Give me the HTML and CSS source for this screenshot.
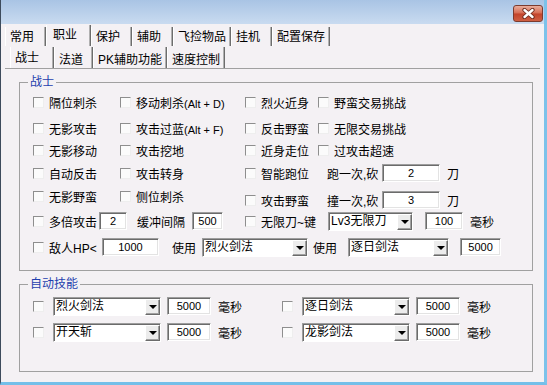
FILE: index.html
```html
<!DOCTYPE html>
<html lang="zh-CN">
<head>
    <meta charset="UTF-8">
    <title>职业 - 战士</title>
    <link rel="stylesheet" href="styles.css">
</head>
<body>

    <div class="window">
        <div class="titlebar">
            <div class="close-button">
                <svg width="13" height="11" viewBox="0 0 13 11">
                    <path d="M2.5 2 L10.5 9 M10.5 2 L2.5 9" stroke="#6b2a1c" stroke-width="4.2" stroke-linecap="round"/>
                    <path d="M2.5 2 L10.5 9 M10.5 2 L2.5 9" stroke="#fff" stroke-width="2.4" stroke-linecap="round"/>
                </svg>
            </div>
        </div>

        <div class="client">
            <div class="tabs tabs-main">
                <div class="tab">常用</div>
                <div class="tab active">职业</div>
                <div class="tab">保护</div>
                <div class="tab">辅助</div>
                <div class="tab">飞捡物品</div>
                <div class="tab">挂机</div>
                <div class="tab">配置保存</div>
            </div>
            <div class="tabs tabs-sub">
                <div class="tab active">战士</div>
                <div class="tab">法道</div>
                <div class="tab">PK辅助功能</div>
                <div class="tab">速度控制</div>
            </div>

            <div class="page">
                <fieldset class="group group-warrior">
                    <legend>战士</legend>
                    <div class="rows">
                        <div class="row">
                            <label class="check c1"><input type="checkbox" class="chk"><span>隔位刺杀</span></label>
                            <label class="check c2"><input type="checkbox" class="chk"><span>移动刺杀<span class="key">(Alt + D)</span></span></label>
                            <label class="check c3"><input type="checkbox" class="chk"><span>烈火近身</span></label>
                            <label class="check"><input type="checkbox" class="chk"><span>野蛮交易挑战</span></label>
                        </div>
                        <div class="row">
                            <label class="check c1"><input type="checkbox" class="chk"><span>无影攻击</span></label>
                            <label class="check c2"><input type="checkbox" class="chk"><span>攻击过蓝<span class="key">(Alt + F)</span></span></label>
                            <label class="check c3"><input type="checkbox" class="chk"><span>反击野蛮</span></label>
                            <label class="check"><input type="checkbox" class="chk"><span>无限交易挑战</span></label>
                        </div>
                        <div class="row">
                            <label class="check c1"><input type="checkbox" class="chk"><span>无影移动</span></label>
                            <label class="check c2"><input type="checkbox" class="chk"><span>攻击挖地</span></label>
                            <label class="check c3"><input type="checkbox" class="chk"><span>近身走位</span></label>
                            <label class="check"><input type="checkbox" class="chk"><span>过攻击超速</span></label>
                        </div>
                        <div class="row">
                            <label class="check c1"><input type="checkbox" class="chk"><span>自动反击</span></label>
                            <label class="check c2"><input type="checkbox" class="chk"><span>攻击转身</span></label>
                            <label class="check c3"><input type="checkbox" class="chk"><span>智能跑位</span></label>
                            <span class="lead">跑一次,砍</span>
                            <input type="text" class="num w-hit" value="2">
                            <span class="unit">刀</span>
                        </div>
                        <div class="row">
                            <label class="check c1"><input type="checkbox" class="chk"><span>无影野蛮</span></label>
                            <label class="check c2"><input type="checkbox" class="chk"><span>侧位刺杀</span></label>
                            <div class="shift">
                                <label class="check c3"><input type="checkbox" class="chk"><span>攻击野蛮</span></label>
                                <span class="lead">撞一次,砍</span>
                                <input type="text" class="num w-hit" value="3">
                                <span class="unit">刀</span>
                            </div>
                        </div>
                        <div class="row">
                            <label class="check"><input type="checkbox" class="chk"><span>多倍攻击</span></label>
                            <input type="text" class="num w-multi" value="2">
                            <span class="buffer-label">缓冲间隔</span>
                            <input type="text" class="num w-buffer" value="500">
                            <label class="check infinite"><input type="checkbox" class="chk"><span>无限刀~键</span></label>
                            <div class="combo w-lv">
                                <span class="combo-text">Lv3无限刀</span>
                                <span class="combo-btn"><i class="arrow"></i></span>
                            </div>
                            <input type="text" class="num w-ms" value="100">
                            <span class="unit">毫秒</span>
                        </div>
                        <div class="row">
                            <label class="check hp"><input type="checkbox" class="chk"><span>敌人HP&lt;</span></label>
                            <input type="text" class="num w-hp" value="1000">
                            <span class="use-1">使用</span>
                            <div class="combo w-skill-a">
                                <span class="combo-text">烈火剑法</span>
                                <span class="combo-btn"><i class="arrow"></i></span>
                            </div>
                            <span class="use-2">使用</span>
                            <div class="combo w-skill-b">
                                <span class="combo-text">逐日剑法</span>
                                <span class="combo-btn"><i class="arrow"></i></span>
                            </div>
                            <input type="text" class="num w-delay" value="5000">
                        </div>
                    </div>
                </fieldset>

                <fieldset class="group group-auto">
                    <legend>自动技能</legend>
                    <div class="skill-rows">
                        <div class="row">
                            <div class="skill">
                                <input type="checkbox" class="chk">
                                <div class="combo w-auto">
                                    <span class="combo-text">烈火剑法</span>
                                    <span class="combo-btn"><i class="arrow"></i></span>
                                </div>
                                <input type="text" class="num w-auto-ms" value="5000">
                                <span class="unit">毫秒</span>
                            </div>
                            <div class="skill">
                                <input type="checkbox" class="chk">
                                <div class="combo w-auto">
                                    <span class="combo-text">逐日剑法</span>
                                    <span class="combo-btn"><i class="arrow"></i></span>
                                </div>
                                <input type="text" class="num w-auto-ms" value="5000">
                                <span class="unit">毫秒</span>
                            </div>
                        </div>
                        <div class="row">
                            <div class="skill">
                                <input type="checkbox" class="chk">
                                <div class="combo w-auto">
                                    <span class="combo-text">开天斩</span>
                                    <span class="combo-btn"><i class="arrow"></i></span>
                                </div>
                                <input type="text" class="num w-auto-ms" value="5000">
                                <span class="unit">毫秒</span>
                            </div>
                            <div class="skill">
                                <input type="checkbox" class="chk">
                                <div class="combo w-auto">
                                    <span class="combo-text">龙影剑法</span>
                                    <span class="combo-btn"><i class="arrow"></i></span>
                                </div>
                                <input type="text" class="num w-auto-ms" value="5000">
                                <span class="unit">毫秒</span>
                            </div>
                        </div>
                    </div>
                </fieldset>
            </div>
        </div>
    </div>

</body>
</html>
```

FILE: styles.css
```css
* {
    box-sizing: border-box;
}

body {
    margin: 0;
    font-family: "Liberation Sans", "Noto Sans CJK SC", sans-serif;
    font-size: 12px;
    color: #000;
    background-color: #f4f1f4;
}

.window {
    width: 547px;
    height: 385px;
    display: flex;
    flex-direction: column;
    border-left: 1px solid #3d4b5c;
    border-right: 3px solid #7cc2ea;
    border-bottom: 3px solid #74bfe9;
    background-color: #f4f1f4;
}

/* title bar */
.titlebar {
    flex: none;
    height: 24px;
    display: flex;
    justify-content: flex-end;
    align-items: flex-start;
    padding: 5px 1px 0 0;
    background: linear-gradient(#a9c4e4, #c9dbf0);
}

.close-button {
    width: 30px;
    height: 17px;
    display: flex;
    align-items: center;
    justify-content: center;
    border: 1px solid #7b3b2f;
    border-radius: 3px;
    background: linear-gradient(#e9ad9c, #d66b52 48%, #c2432a 52%, #cf5f43);
}

.client {
    flex: 1;
    display: flex;
    flex-direction: column;
    padding: 3px 4px 0 4px;
}

/* tabs */
.tabs {
    display: flex;
    flex: none;
}

.tabs-main {
    height: 19px;
}

.tabs-sub {
    height: 21px;
    margin-top: 1px;
    padding-left: 5px;
}

.tab {
    min-width: 41px;
    padding: 2px 4px 0 4px;
    line-height: 16px;
    white-space: nowrap;
    border-left: 1px solid #fff;
    border-right: 1px solid #6d6d6d;
    box-shadow: inset -1px 0 #b0b0b0;
}

.tabs-main .tab.active {
    min-width: 45px;
    margin-top: -2px;
    padding: 2px 4px 0 6px;
}

.tabs-sub .tab {
    min-width: 39px;
    padding-top: 5px;
}

.tabs-sub .tab.active {
    min-width: 44px;
    padding-top: 3px;
}

/* tab page */
.page {
    flex: 1;
    border-top: 1px solid #a0a0a0;
    padding: 6px 0 0 14px;
}

.group {
    margin: 0;
    width: 514px;
    border: 1px solid #a0a0a0;
    padding: 2px 0 0 13px;
}

.group legend {
    margin-left: -5px;
    padding: 0 2px;
    line-height: 14px;
    color: #1f3fae;
}

.group-warrior {
    height: 196px;
}

.group-auto {
    height: 95px;
    margin-top: 6px;
    padding-top: 4px;
}

.rows {
    display: grid;
    grid-template-rows: 26px 22px 23px 23px 25px 26px 22px;
}

.skill-rows {
    display: flex;
    flex-direction: column;
    gap: 4px;
}

.row {
    height: 22px;
    display: flex;
    align-items: center;
    white-space: nowrap;
}

.c1 { width: 87px; }
.c2 { width: 125px; }
.c3 { width: 73px; }

.check {
    display: flex;
    align-items: center;
    gap: 5px;
}

.key {
    font-size: 11px;
}

.chk {
    appearance: none;
    margin: 0;
    width: 11px;
    height: 11px;
    flex: none;
    border: 1px solid;
    border-color: #8e8e8e #eeeeee #eeeeee #8e8e8e;
    background-color: #fbfbfb;
}

.shift {
    display: flex;
    align-items: center;
    margin-top: 8px;
}

.lead {
    width: 55px;
    margin-left: 9px;
}

.unit {
    margin-left: 7px;
}

/* sunken edit boxes */
.num {
    height: 18px;
    margin: 0;
    padding: 0;
    border: 1px solid;
    border-color: #9d9d9d #fff #fff #9d9d9d;
    box-shadow: inset 1px 1px 0 #6b6b6b, inset -1px -1px 0 #e3e3e3;
    background-color: #fff;
    font-family: "Liberation Sans", sans-serif;
    font-size: 11px;
    text-align: center;
    color: #000;
}

.w-hit { width: 58px; }
.w-multi { width: 28px; margin-left: 2px; }
.w-buffer { width: 31px; margin-left: 7px; }
.w-ms { width: 38px; margin-left: 12px; }
.w-hp { width: 57px; }
.w-delay { width: 41px; margin-left: 11px; }
.w-auto-ms { width: 44px; margin-left: 6px; }

.buffer-label {
    margin-left: 10px;
}

.infinite {
    width: 83px;
    margin-left: 22px;
}

.hp {
    width: 69px;
}

.use-1 {
    margin-left: 13px;
}

.use-2 {
    margin-left: 5px;
}

/* combo boxes */
.combo {
    height: 19px;
    display: flex;
    border: 1px solid;
    border-color: #9d9d9d #fff #fff #9d9d9d;
    box-shadow: inset 1px 1px 0 #6b6b6b;
    background-color: #fff;
    padding: 1px 0 0 1px;
}

.combo-text {
    flex: 1;
    padding-left: 1px;
    line-height: 15px;
    overflow: hidden;
}

.combo-btn {
    width: 15px;
    height: 16px;
    display: flex;
    align-items: center;
    justify-content: center;
    border: 1px solid;
    border-color: #fff #6b6b6b #6b6b6b #fff;
    box-shadow: inset -1px -1px 0 #a0a0a0;
    background-color: #ececec;
}

.arrow {
    width: 0;
    height: 0;
    border-left: 4px solid transparent;
    border-right: 4px solid transparent;
    border-top: 4px solid #000;
}

.w-lv { width: 85px; }
.w-skill-a { width: 106px; margin-left: 6px; }
.w-skill-b { width: 101px; margin-left: 11px; }
.w-auto { width: 108px; margin-left: 9px; }

.skill {
    width: 249px;
    display: flex;
    align-items: center;
}
```
